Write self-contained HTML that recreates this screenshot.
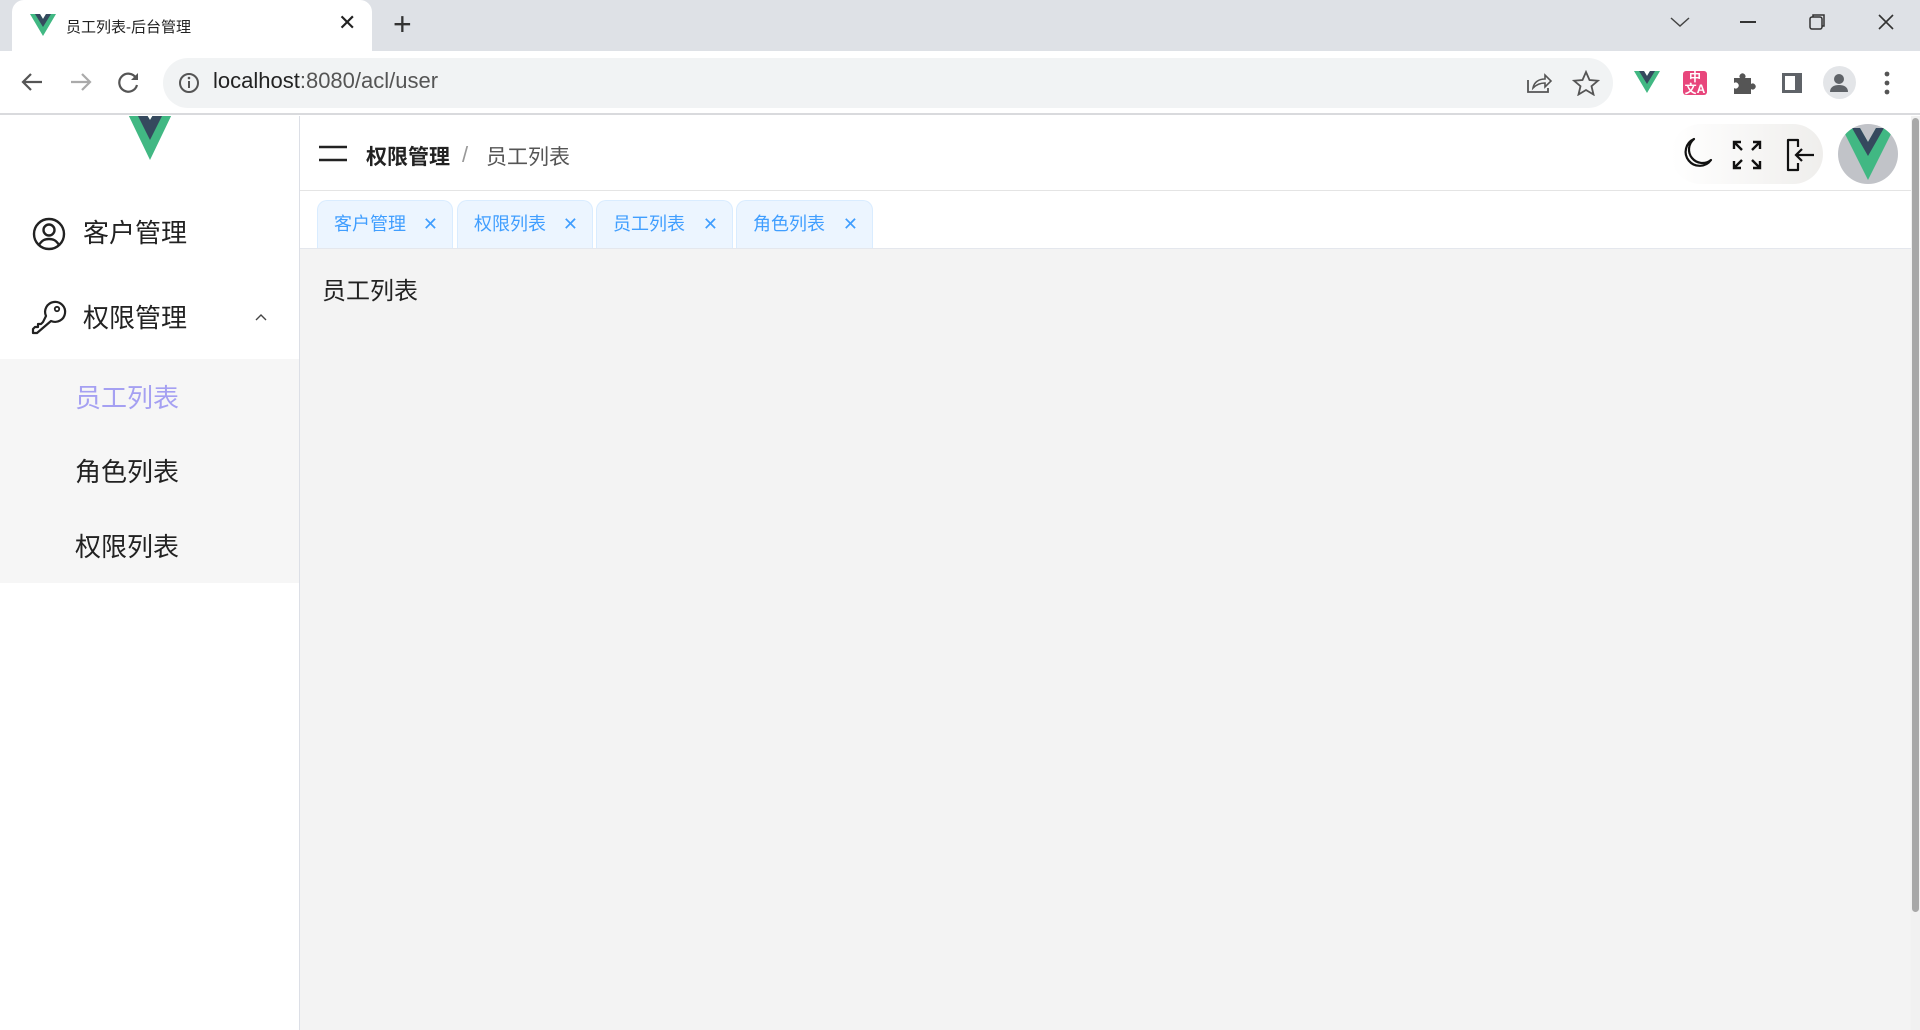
<!DOCTYPE html>
<html><head><meta charset="utf-8"><style>
*{margin:0;padding:0;box-sizing:border-box}
body{width:1920px;height:1030px;overflow:hidden;font-family:"Liberation Sans","Noto Sans CJK SC",sans-serif;background:#fff;position:relative}
.abs{position:absolute}
.tabstrip{left:0;top:0;width:1920px;height:51px;background:#dee1e6}
.ctab{left:12px;top:0;width:360px;height:51px;background:#fff;border-radius:12px 12px 0 0}
.toolbar{left:0;top:51px;width:1920px;height:64px;background:#fff;border-bottom:2px solid #d9dadd}
.omni{left:163px;top:58px;width:1450px;height:50px;background:#f1f3f4;border-radius:25px}
.side{left:0;top:116px;width:300px;height:914px;background:#fff;border-right:1px solid #dcdfe6}
.mi{position:absolute;left:83px;font-size:26px;color:#222;line-height:30px}
.si{position:absolute;left:75px;font-size:26px;color:#222;line-height:30px}
.sub{left:0;top:359px;width:299px;height:224px;background:#f6f6f6}
.main{left:300px;top:116px;width:1611px;height:914px;background:#f3f3f3}
.hdr{left:300px;top:116px;width:1611px;height:75px;background:#fff;border-bottom:1px solid #e4e4e4}
.tabs{left:300px;top:191px;width:1611px;height:58px;background:#fff;border-bottom:1px solid #e4e7ed}
.tg{position:absolute;top:200px;height:48px;background:#ecf5ff;border:1px solid #d9ecff;border-bottom:none;border-radius:10px 10px 0 0;color:#409eff;font-size:18px;line-height:46px;padding-left:16px}
.tg span{position:absolute;right:14px;top:0;font-size:18px}
</style></head><body>
<div class="abs tabstrip"></div>
<div class="abs ctab"></div>
<svg class="abs" style="left:30px;top:14px" width="26" height="22" viewBox="0 0 26 22"><path d="M0 0h10l3 5 3-5h10L13 22z" fill="#41b883"/><path d="M5 0h5l3 5 3-5h5L13 13z" fill="#35495e"/></svg>
<div class="abs" style="left:66px;top:16px;font-size:15px;color:#222">员工列表-后台管理</div>
<div class="abs" style="left:338px;top:10px;font-size:22px;color:#222">✕</div>
<div class="abs" style="left:393px;top:6px;font-size:32px;color:#333;font-weight:300">+</div>
<svg class="abs" style="left:1668px;top:14px" width="24" height="16"><path d="M3 4l9 8 9-8" stroke="#444" fill="none" stroke-width="1.5"/></svg>
<div class="abs" style="left:1740px;top:21px;width:16px;height:1.5px;background:#333"></div>
<svg class="abs" style="left:1808px;top:12px" width="20" height="20"><rect x="2" y="5" width="12" height="12" rx="2" stroke="#333" fill="none" stroke-width="1.5"/><path d="M5 5V3h11v11h-2" stroke="#333" fill="none" stroke-width="1.5"/></svg>
<svg class="abs" style="left:1876px;top:12px" width="20" height="20"><path d="M3 3l14 14M17 3L3 17" stroke="#333" stroke-width="1.6"/></svg>
<div class="abs toolbar"></div>
<div class="abs omni"></div>
<svg class="abs" style="left:18px;top:70px" width="28" height="24"><path d="M24 12H6M13 4l-8 8 8 8" stroke="#555" fill="none" stroke-width="2.2"/></svg>
<svg class="abs" style="left:67px;top:70px" width="28" height="24"><path d="M4 12h18M15 4l8 8-8 8" stroke="#aaa" fill="none" stroke-width="2.2"/></svg>
<svg class="abs" style="left:116px;top:70px" width="26" height="26"><path d="M20 8A9 9 0 1 0 21 15" stroke="#555" fill="none" stroke-width="2.2"/><path d="M22 3v7h-7z" fill="#555"/></svg>
<svg class="abs" style="left:177px;top:71px" width="24" height="24"><circle cx="12" cy="12" r="9" stroke="#555" fill="none" stroke-width="2"/><path d="M12 10v7" stroke="#555" stroke-width="2"/><circle cx="12" cy="7" r="1.3" fill="#555"/></svg>
<div class="abs" style="left:213px;top:68px;font-size:22px;color:#222">localhost<span style="color:#555">:8080/acl/user</span></div>
<svg class="abs" style="left:1525px;top:70px" width="28" height="26"><path d="M3 10v12h20v-4" stroke="#555" fill="none" stroke-width="1.8"/><path d="M8 18c1-6 6-9 12-9V5l6 6-6 6v-4c-5 0-9 2-12 5z" stroke="#555" fill="none" stroke-width="1.6"/></svg>
<svg class="abs" style="left:1572px;top:70px" width="28" height="26"><path d="M14 2l3.5 8 8.5.7-6.5 5.5 2 8.3L14 20l-7.5 4.5 2-8.3L2 10.7l8.5-.7z" stroke="#555" fill="none" stroke-width="1.8"/></svg>
<svg class="abs" style="left:1634px;top:71px" width="26" height="22" viewBox="0 0 26 22"><path d="M0 0h10l3 5 3-5h10L13 22z" fill="#41b883"/><path d="M5 0h5l3 5 3-5h5L13 13z" fill="#35495e"/></svg>
<div class="abs" style="left:1683px;top:71px;width:24px;height:24px;background:#e8467c;border-radius:3px;color:#fff;font-size:12px;line-height:12px;text-align:center;font-weight:bold">中<br>文A</div>
<svg class="abs" style="left:1730px;top:70px" width="26" height="26"><path d="M4 8h6a3 3 0 1 1 5 0h6v6a3 3 0 1 1 0 5v5H4v-6a3 3 0 1 0 0-5z" fill="#555"/></svg>
<svg class="abs" style="left:1780px;top:71px" width="24" height="24"><rect x="2" y="2" width="20" height="20" fill="#5f6368"/><rect x="5" y="5" width="10" height="14" fill="#fff"/></svg>
<div class="abs" style="left:1823px;top:66px;width:33px;height:33px;border-radius:50%;background:#e3e5e8"></div>
<svg class="abs" style="left:1826px;top:70px" width="26" height="26"><circle cx="13" cy="9" r="5" fill="#5f6368"/><path d="M4 22c0-5 4-7 9-7s9 2 9 7z" fill="#5f6368"/></svg>
<svg class="abs" style="left:1880px;top:70px" width="14" height="26"><circle cx="7" cy="4" r="2.4" fill="#555"/><circle cx="7" cy="13" r="2.4" fill="#555"/><circle cx="7" cy="22" r="2.4" fill="#555"/></svg>

<div class="abs side"></div>
<svg class="abs" style="left:126px;top:116px" width="48" height="44" viewBox="0 6 48 44"><path d="M0 0h18l6 10 6-10h18L24 50z" fill="#41b883"/><path d="M9 0h9l6 10 6-10h9L24 30z" fill="#35495e"/></svg>
<svg class="abs" style="left:32px;top:217px" width="34" height="34"><circle cx="17" cy="17" r="15" stroke="#222" fill="none" stroke-width="2.4"/><circle cx="17" cy="13" r="5.5" stroke="#222" fill="none" stroke-width="2.4"/><path d="M7 28c3-5 6-6 10-6s7 1 10 6" stroke="#222" fill="none" stroke-width="2.4"/></svg>
<div class="mi" style="top:218px">客户管理</div>
<svg class="abs" style="left:31px;top:299px" width="36" height="36"><path d="M15 17A10 10 0 1 1 20 22L6 34H2v-4l2-2h3v-3h3l2-2z" stroke="#222" fill="none" stroke-width="2.2" stroke-linejoin="round"/><circle cx="26" cy="10" r="2.2" stroke="#222" fill="none" stroke-width="1.8"/></svg>
<div class="mi" style="top:303px">权限管理</div>
<svg class="abs" style="left:254px;top:312px" width="14" height="10"><path d="M2 8l5-5 5 5" stroke="#444" fill="none" stroke-width="1.4"/></svg>
<div class="abs sub"></div>
<div class="si" style="top:383px;color:#a5a0f2">员工列表</div>
<div class="si" style="top:457px">角色列表</div>
<div class="si" style="top:532px">权限列表</div>

<div class="abs main"></div>
<div class="abs hdr"></div>
<svg class="abs" style="left:319px;top:145px" width="28" height="18"><path d="M0 2h28M0 15h28" stroke="#222" stroke-width="2.6"/></svg>
<div class="abs" style="left:366px;top:141px;font-size:21px;font-weight:bold;color:#222">权限管理</div>
<div class="abs" style="left:462px;top:142px;font-size:22px;color:#999">/</div>
<div class="abs" style="left:486px;top:141px;font-size:21px;color:#555">员工列表</div>
<div class="abs" style="left:1671px;top:124px;width:152px;height:60px;border-radius:30px;background:linear-gradient(90deg,#fff,#efeeec)"></div>
<svg class="abs" style="left:1680px;top:136px" width="34" height="34"><path d="M14 3A14 14 0 1 0 31 24 12 12 0 0 1 14 3z" stroke="#111" fill="none" stroke-width="2.2" stroke-linejoin="round"/></svg>
<svg class="abs" style="left:1732px;top:140px" width="30" height="30"><path d="M2 9V2h7M2 2l8 8M28 9V2h-7M28 2l-8 8M2 21v7h7M2 28l8-8M28 21v7h-7M28 28l-8-8" stroke="#111" fill="none" stroke-width="2.4"/></svg>
<svg class="abs" style="left:1784px;top:138px" width="32" height="34"><path d="M14 9V2H4v30h10v-7" stroke="#111" fill="none" stroke-width="2.2" stroke-linejoin="round"/><path d="M30 17H12M18 11l-6 6 6 6" stroke="#111" fill="none" stroke-width="2.2"/></svg>
<div class="abs" style="left:1838px;top:124px;width:60px;height:60px;border-radius:50%;background:#c1c3c8;overflow:hidden"><svg width="60" height="60" viewBox="0 0 60 60"><path d="M4 4h18l8 14 8-14h18L30 56z" fill="#41b883"/><path d="M14 4h8l8 14 8-14h8L30 32z" fill="#35495e"/></svg></div>
<div class="abs tabs"></div>
<div class="tg" style="left:317px;width:136px">客户管理<span>✕</span></div>
<div class="tg" style="left:457px;width:136px">权限列表<span>✕</span></div>
<div class="tg" style="left:596px;width:137px">员工列表<span>✕</span></div>
<div class="tg" style="left:736px;width:137px">角色列表<span>✕</span></div>
<div class="abs" style="left:322px;top:271px;font-size:24px;color:#222">员工列表</div>
<div class="abs" style="left:1911px;top:116px;width:9px;height:914px;background:#f1f1f1"></div>
<div class="abs" style="left:1912px;top:118px;width:7px;height:794px;background:#a8a8a8;border-radius:4px"></div>
</body></html>
